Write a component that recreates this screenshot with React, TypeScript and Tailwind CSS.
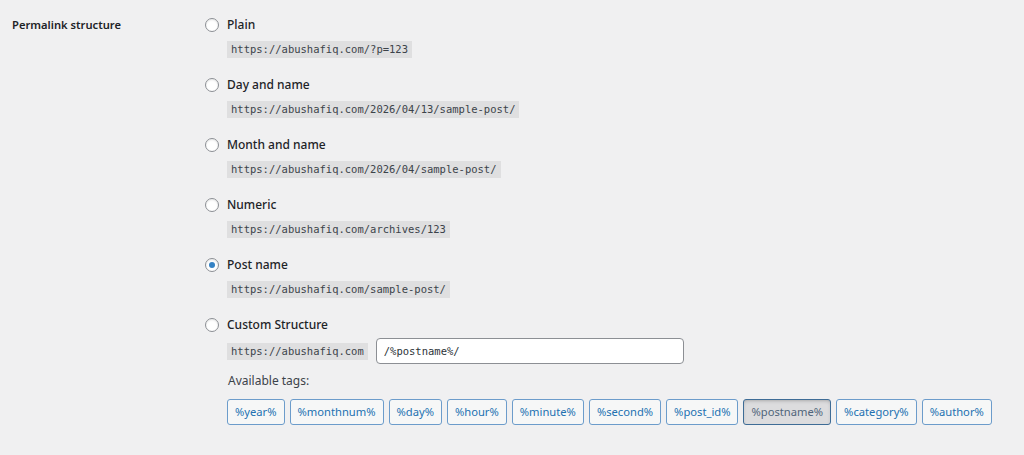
const options = [
  { label: "Plain", url: "https://abushafiq.com/?p=123" },
  { label: "Day and name", url: "https://abushafiq.com/2026/04/13/sample-post/" },
  { label: "Month and name", url: "https://abushafiq.com/2026/04/sample-post/" },
  { label: "Numeric", url: "https://abushafiq.com/archives/123" },
  { label: "Post name", url: "https://abushafiq.com/sample-post/", checked: true },
];

const tags = [
  "%year%",
  "%monthnum%",
  "%day%",
  "%hour%",
  "%minute%",
  "%second%",
  "%post_id%",
  "%postname%",
  "%category%",
  "%author%",
];

function Radio({ checked }: { checked?: boolean }) {
  return (
    <span className="flex h-[14px] w-[14px] shrink-0 items-center justify-center rounded-full border border-[#8c8f94] bg-white shadow-[inset_0_1px_2px_rgba(0,0,0,0.1)]">
      {checked && <span className="h-[6px] w-[6px] rounded-full bg-[#3582c4]" />}
    </span>
  );
}

function Code({ children }: { children: string }) {
  return (
    <code className="block bg-[#dfdfe0] px-[4px] font-['DejaVu_Sans_Mono',monospace] text-[10.5px] leading-[17px] text-[#3c434a]">
      {children}
    </code>
  );
}

export default function App() {
  return (
    <div className="min-h-[455px] bg-[#f0f0f1] font-['Noto_Sans',sans-serif] text-[12px] text-[#1d2327]">
      <div className="flex pl-[12px] pt-[15px]">
        <div className="w-[193px] shrink-0 text-[11.2px] font-semibold leading-[20px]">
          Permalink structure
        </div>

        <div className="flex flex-col gap-[17px]">
          {options.map((o) => (
            <div key={o.label} className="flex flex-col gap-[6px]">
              <label className="flex h-[20px] items-center gap-[8px] font-medium">
                <Radio checked={o.checked} />
                {o.label}
              </label>
              <div className="flex pl-[22px]">
                <Code>{o.url}</Code>
              </div>
            </div>
          ))}

          <div className="flex flex-col">
            <label className="flex h-[20px] items-center gap-[8px] font-medium">
              <Radio />
              Custom Structure
            </label>
            <div className="mt-[3px] flex items-center gap-[8px] pl-[22px]">
              <Code>https://abushafiq.com</Code>
              <input
                readOnly
                value="/%postname%/"
                className="h-[26px] w-[308px] rounded-[4px] border border-[#8c8f94] bg-white px-[7px] font-['DejaVu_Sans_Mono',monospace] text-[10.5px] text-[#2c3338] outline-none"
              />
            </div>
            <div className="mt-[7px] pl-[23px] leading-[20px] text-[#3c434a]">Available tags:</div>
            <div className="mt-[8px] flex gap-[5px] pl-[22px]">
              {tags.map((t) => {
                const active = t === "%postname%";
                return (
                  <button
                    key={t}
                    className={
                      active
                        ? "h-[26px] rounded-[3px] border border-[#3e6c96] bg-[#dcdcde] px-[7px] text-[11.2px] text-[#50657a] shadow-[inset_0_2px_5px_-3px_rgba(0,0,0,0.5)]"
                        : "h-[26px] rounded-[3px] border border-[#6c9ccb] bg-[#f6f7f7] px-[7px] text-[11.2px] text-[#2271b1]"
                    }
                  >
                    {t}
                  </button>
                );
              })}
            </div>
          </div>
        </div>
      </div>
    </div>
  );
}
